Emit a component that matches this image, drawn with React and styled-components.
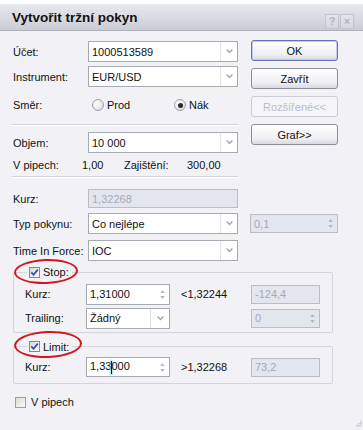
import React from 'react';
import styled, { createGlobalStyle } from 'styled-components';

const GlobalStyle = createGlobalStyle`
  html, body {
    margin: 0;
    padding: 0;
    background: #fff;
  }
  body {
    font-family: 'Liberation Sans', Arial, sans-serif;
    font-size: 11px;
    color: #111;
  }
`;

const Dialog = styled.div`
  position: relative;
  width: 363px;
  height: 430px;
  padding-top: 4px;
  box-sizing: border-box;
  display: flex;
  flex-direction: column;
  background: #fff;
  overflow: hidden;
`;

const TitleBar = styled.div`
  height: 27px;
  flex-shrink: 0;
  box-sizing: border-box;
  display: flex;
  align-items: center;
  justify-content: space-between;
  padding: 0 9px 0 12px;
  background: linear-gradient(#e8e9ee, #cbccd4);
  border-bottom: 1px solid #afb1ba;
`;

const Title = styled.div`
  font-size: 13.5px;
  font-weight: bold;
  color: #111;
`;

const TitleButtons = styled.div`
  align-self: flex-end;
  margin-bottom: 1px;
  display: flex;
  gap: 1px;
`;

const TitleButton = styled.div`
  width: 14px;
  height: 15px;
  box-sizing: border-box;
  border: 1px solid #c2c3cb;
  background: linear-gradient(#e4e5ea, #d6d7dd);
  color: #b2b4bd;
  font-weight: bold;
  font-size: 11px;
  line-height: 13px;
  text-align: center;
`;

const Body = styled.div`
  flex: 1;
  background: #f1f1f6;
  padding: 10px 0 0 13px;
`;

const TopSection = styled.div`
  display: flex;
  gap: 13px;
`;

const LeftColumn = styled.div`
  width: 225px;
  display: flex;
  flex-direction: column;
`;

const ButtonColumn = styled.div`
  width: 87px;
  margin-top: -1px;
  display: flex;
  flex-direction: column;
  gap: 7px;
`;

const Button = styled.div`
  height: 21px;
  box-sizing: border-box;
  display: flex;
  align-items: center;
  justify-content: center;
  border-radius: 3px;
  border: 1px solid ${p => (p.$disabled ? '#cacdd6' : p.$default ? '#6a72b5' : '#8b8d97')};
  box-shadow: ${p => (p.$default ? 'inset 0 0 0 1px #c4c9f2' : 'none')};
  background: ${p => (p.$disabled ? '#f5f5f8' : 'linear-gradient(#ffffff, #f0f0f4 70%, #d9dae2)')};
  color: ${p => (p.$disabled ? '#b8bcc8' : '#111')};
`;

const Row = styled.div`
  display: grid;
  grid-template-columns: 75px 150px 100px;
  grid-template-rows: ${p => p.$h}px;
  align-items: center;
  margin-top: ${p => p.$mt || 0}px;
`;

const Extra = styled.div`
  padding-left: 12px;
  display: flex;
  align-items: center;
`;

const Label = styled.span`
  white-space: nowrap;
`;

const Separator = styled.div`
  height: 1px;
  width: 226px;
  margin-left: -1px;
  margin-top: ${p => p.$mt}px;
  background: #d3d4dc;
  border-bottom: 1px solid #fff;
`;

const InfoRow = styled.div`
  display: grid;
  grid-template-columns: 69px 42px 63px auto;
  height: 16px;
  align-items: center;
  margin-top: 4px;
`;

const Field = styled.div`
  flex: 1;
  height: ${p => (p.$h ? `${p.$h}px` : '100%')};
  box-sizing: border-box;
  display: flex;
  align-items: center;
  border: 1px solid ${p => (p.$disabled ? '#b9bdc7' : '#a6aab3')};
  background: ${p => (p.$disabled ? '#e4e6ee' : '#fff')};
  color: ${p => (p.$disabled ? '#a4a9b6' : '#111')};
  padding-left: 3px;
  white-space: nowrap;
`;

const FieldText = styled.span`
  flex: 1;
`;

const ArrowZone = styled.span`
  width: ${p => p.$w || 16}px;
  align-self: stretch;
  display: flex;
  align-items: center;
  justify-content: center;
  border-left: 1px solid #e0e2e8;
`;

const SpinZone = styled.span`
  width: 14px;
  display: flex;
  align-items: center;
  justify-content: center;
`;

const Caret = styled.span`
  display: inline-block;
  width: 1px;
  height: 13px;
  margin: 0 -1px 0 0;
  vertical-align: middle;
  background: #111;
  box-shadow: 0 0 2px 1px rgba(80, 210, 230, 0.6);
`;

const Chevron = () => (
  <svg width="7" height="5" viewBox="0 0 7 5">
    <path d="M0.6 0.6 L3.5 3.6 L6.4 0.6" fill="none" stroke="#a2a6b0" strokeWidth="1.4" />
  </svg>
);

const SpinArrows = () => (
  <svg width="5" height="11" viewBox="0 0 5 11">
    <path d="M2.5 1 L4.8 4 L0.2 4 Z M0.2 7 L4.8 7 L2.5 10 Z" fill="#b5b8c1" />
  </svg>
);

const Select = ({ value, arrow }) => (
  <Field style={{ paddingRight: 0 }}>
    <FieldText>{value}</FieldText>
    <ArrowZone $w={arrow}>
      <Chevron />
    </ArrowZone>
  </Field>
);

const Spin = ({ children, disabled, h }) => (
  <Field $disabled={disabled} $h={h}>
    <FieldText>{children}</FieldText>
    <SpinZone>
      <SpinArrows />
    </SpinZone>
  </Field>
);

const RadioGroup = styled.div`
  display: flex;
  padding-left: 4px;
`;

const RadioOption = styled.label`
  display: flex;
  align-items: center;
  gap: 3px;
  width: ${p => p.$w || 'auto'};
`;

const Radio = styled.span`
  width: 12px;
  height: 12px;
  box-sizing: border-box;
  border-radius: 50%;
  border: 1px solid #9da3ad;
  background: radial-gradient(circle at 35% 35%, #ffffff, #d4d6dc);
  display: flex;
  align-items: center;
  justify-content: center;

  &::after {
    content: '';
    width: 5px;
    height: 5px;
    border-radius: 50%;
    background: ${p => (p.$checked ? '#2a2a2e' : 'transparent')};
  }
`;

const Group = styled.fieldset`
  width: 320px;
  box-sizing: border-box;
  margin: ${p => p.$mt}px 0 0 0;
  padding: ${p => p.$pt}px 0 ${p => p.$pb}px 11px;
  border: 1px solid #d3d4dc;
  border-radius: 2px;
  min-width: 0;
`;

const Legend = styled.legend`
  padding: 0 3px 0 2px;
  margin-left: 2px;
`;

const LegendInner = styled.span`
  position: relative;
  display: inline-flex;
  align-items: center;
  gap: 3px;
  height: 12px;
`;

const Ring = styled.span`
  position: absolute;
  left: -15px;
  top: ${p => p.$top}px;
  width: ${p => p.$w}px;
  height: ${p => p.$h}px;
  box-sizing: border-box;
  border: 2.5px solid #d3161d;
  border-radius: 50%;
  transform: rotate(-2deg);
  pointer-events: none;
`;

const GroupRow = styled.div`
  display: grid;
  grid-template-columns: 61px 84px 81px 69px;
  grid-template-rows: ${p => p.$h}px;
  align-items: center;
  margin-top: ${p => p.$mt || 0}px;
`;

const Cell = styled.div`
  display: flex;
  align-items: center;
  height: 100%;
`;

const Hint = styled.span`
  padding-left: 11px;
`;

const CheckBox = styled.span`
  width: 11px;
  height: 11px;
  box-sizing: border-box;
  border: 1px solid ${p => (p.$checked ? '#7d8aa2' : '#9a9ea8')};
  background: linear-gradient(135deg, #dadad4, #fbfbfb);
  display: inline-flex;
  align-items: center;
  justify-content: center;
`;

const Check = ({ checked }) => (
  <CheckBox $checked={checked}>
    {checked && (
      <svg width="9" height="9" viewBox="0 0 9 9">
        <path d="M1.3 4.4 L3.5 6.8 L7.8 1.6" fill="none" stroke="#2b4fb9" strokeWidth="1.7" />
      </svg>
    )}
  </CheckBox>
);

const CheckRow = styled.label`
  display: flex;
  align-items: center;
  gap: 5px;
  height: 12px;
  margin: 12px 0 0 2px;
`;

const Grip = styled.svg`
  position: absolute;
  right: 1px;
  bottom: 3px;
`;

export default function App() {
  return (
    <>
      <GlobalStyle />
      <Dialog>
        <TitleBar>
          <Title>Vytvořit tržní pokyn</Title>
          <TitleButtons>
            <TitleButton>?</TitleButton>
            <TitleButton>×</TitleButton>
          </TitleButtons>
        </TitleBar>
        <Body>
          <TopSection>
            <LeftColumn>
              <Row $h={21}>
                <Label>Účet:</Label>
                <Cell>
                  <Select value="1000513589" />
                </Cell>
              </Row>
              <Row $h={21} $mt={4}>
                <Label>Instrument:</Label>
                <Cell>
                  <Select value="EUR/USD" />
                </Cell>
              </Row>
              <Row $h={20} $mt={8}>
                <Label>Směr:</Label>
                <RadioGroup>
                  <RadioOption $w="82px">
                    <Radio />
                    Prod
                  </RadioOption>
                  <RadioOption>
                    <Radio $checked />
                    Nák
                  </RadioOption>
                </RadioGroup>
              </Row>
              <Separator $mt={9} />
              <Row $h={21} $mt={6}>
                <Label>Objem:</Label>
                <Cell>
                  <Select value="10 000" />
                </Cell>
              </Row>
              <InfoRow>
                <span>V pipech:</span>
                <span>1,00</span>
                <span>Zajištění:</span>
                <span>300,00</span>
              </InfoRow>
              <Separator $mt={3} />
            </LeftColumn>
            <ButtonColumn>
              <Button $default>OK</Button>
              <Button>Zavřít</Button>
              <Button $disabled>Rozšířené&lt;&lt;</Button>
              <Button>Graf&gt;&gt;</Button>
            </ButtonColumn>
          </TopSection>

          <Row $h={19} $mt={11}>
            <Label>Kurz:</Label>
            <Cell>
              <Field $disabled>1,32268</Field>
            </Cell>
          </Row>
          <Row $h={21} $mt={5}>
            <Label>Typ pokynu:</Label>
            <Cell>
              <Select value="Co nejlépe" />
            </Cell>
            <Extra>
              <Spin disabled h={19}>0,1</Spin>
            </Extra>
          </Row>
          <Row $h={21} $mt={6}>
            <Label>Time In Force:</Label>
            <Cell>
              <Select value="IOC" />
            </Cell>
          </Row>

          <Group $mt={5} $pt={5} $pb={3}>
            <Legend>
              <LegendInner>
                <Check checked />
                Stop:
                <Ring $top={-7} $w={64} $h={25} />
              </LegendInner>
            </Legend>
            <GroupRow $h={21}>
              <Label>Kurz:</Label>
              <Cell>
                <Spin>1,31000</Spin>
              </Cell>
              <Hint>&lt;1,32244</Hint>
              <Cell>
                <Field $disabled $h={19}>-124,4</Field>
              </Cell>
            </GroupRow>
            <GroupRow $h={21} $mt={3}>
              <Label>Trailing:</Label>
              <Cell>
                <Select value="Žádný" arrow={18} />
              </Cell>
              <span />
              <Cell>
                <Spin disabled h={19}>0</Spin>
              </Cell>
            </GroupRow>
          </Group>

          <Group $mt={8} $pt={4} $pb={6}>
            <Legend>
              <LegendInner>
                <Check checked />
                Limit:
                <Ring $top={-10} $w={68} $h={27} />
              </LegendInner>
            </Legend>
            <GroupRow $h={20}>
              <Label>Kurz:</Label>
              <Cell>
                <Spin>
                  <span>
                    1,33<Caret />000
                  </span>
                </Spin>
              </Cell>
              <Hint>&gt;1,32268</Hint>
              <Cell>
                <Field $disabled $h={19}>73,2</Field>
              </Cell>
            </GroupRow>
          </Group>

          <CheckRow>
            <Check />
            V pipech
          </CheckRow>
        </Body>
        <Grip width="6" height="6" viewBox="0 0 6 6">
          <rect x="4" y="0" width="1.5" height="1.5" fill="#c6c7cf" />
          <rect x="2" y="2" width="1.5" height="1.5" fill="#c6c7cf" />
          <rect x="4" y="2" width="1.5" height="1.5" fill="#c6c7cf" />
          <rect x="0" y="4" width="1.5" height="1.5" fill="#c6c7cf" />
          <rect x="2" y="4" width="1.5" height="1.5" fill="#c6c7cf" />
          <rect x="4" y="4" width="1.5" height="1.5" fill="#c6c7cf" />
        </Grip>
      </Dialog>
    </>
  );
}
